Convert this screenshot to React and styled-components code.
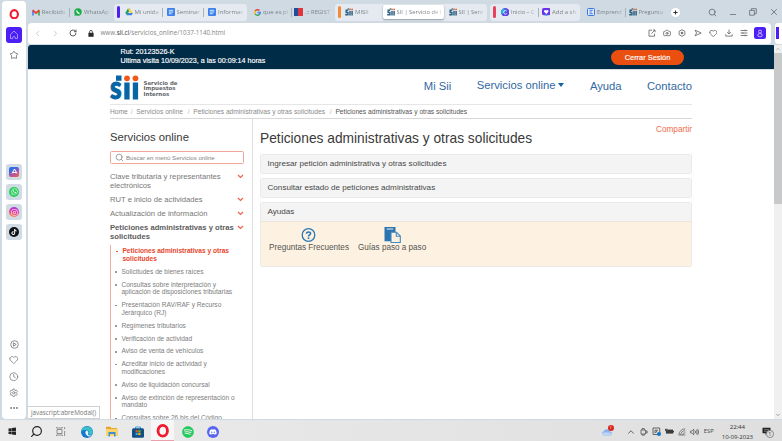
import React from 'react';
import styled, { createGlobalStyle, css } from 'styled-components';
import {
  Search, Heart, Clock, Settings, Camera,
  ChevronLeft, ChevronRight, RotateCw,
  ChevronUp, ChevronDown, X, Ellipsis,
} from 'lucide-react';
import { FaWhatsapp, FaInstagram, FaTiktok, FaSpotify, FaDiscord, FaWindows } from 'react-icons/fa';

const GlobalStyle = createGlobalStyle`
  *, *::before, *::after { box-sizing: border-box; }
  body { margin: 0; overflow: hidden; background: #d0dbe4; font-family: "Liberation Sans", Arial, sans-serif; }
  svg { display: block; flex: none; }
`;

const Desktop = styled.div`
  width: 782px;
  height: 441px;
  display: flex;
  flex-direction: column;
  overflow: hidden;
  white-space: nowrap;
`;
const Browser = styled.div`
  height: 420px;
  display: flex;
  gap: 2px;
  padding: 0 0 1px 2px;
  background: #cfdae3;
`;
const Sidebar = styled.nav`
  width: 24px;
  height: 418px;
  margin-top: 1px;
  display: flex;
  flex-direction: column;
  align-items: center;
  background: #fff;
  border-radius: 4px;
  color: #777c82;
`;
const SideSlot = styled.div`
  height: ${(p) => p.$h}px;
  width: 24px;
  flex: none;
  display: flex;
  align-items: center;
  justify-content: center;
`;
const HomeTile = styled.div`
  width: 16px;
  height: 16px;
  border-radius: 3px;
  display: grid;
  place-items: center;
  background: #4b1ff5;
`;
const AppTiles = styled.div`
  display: grid;
  gap: 4.3px;
  margin: 96.5px 0 96.5px;
`;
const AppTile = styled.div`
  width: 16px;
  height: 16px;
  border-radius: 3px;
  background: #d0dbe3;
  display: grid;
  place-items: center;
`;
const AppGlyph = styled.div`
  width: ${(p) => p.$s || 10}px;
  height: ${(p) => p.$s || 10}px;
  display: grid;
  place-items: center;
  color: #fff;
  border-radius: ${(p) => p.$r || '50%'};
  background: ${(p) => p.$bg};
`;

const Main = styled.div`
  width: 754px;
  height: 419px;
  display: flex;
  flex-direction: column;
`;
const TabStrip = styled.div`
  height: 23px;
  display: flex;
  align-items: center;
  padding: 1px 0 0;
  color: #7d8389;
`;
const TabGroup = styled.div`
  display: flex;
  align-items: center;
  width: ${(p) => p.$w}px;
  height: 17px;
  margin-right: ${(p) => p.$mr || 0}px;
  border-radius: 3px;
  background: #e4eaef;
`;
const GroupMark = styled.div`
  width: 3px;
  height: 12px;
  margin: 0 ${(p) => p.$mr}px 0 3px;
  border-radius: 1.5px;
  background: ${(p) => p.$c};
`;
const TabBox = styled.div`
  width: ${(p) => p.$w}px;
  height: 14px;
  flex: none;
  display: flex;
  align-items: center;
  padding-left: ${(p) => p.$pl}px;
  gap: 2px;
  ${(p) => p.$sep && css`
    &::after { content: ''; width: 1px; height: 9px; margin-left: auto; background: #a9b2ba; }
  `}
  ${(p) => p.$active && css`
    background: #fff;
    border-radius: 2px;
    box-shadow: 0 1px 2px #8d98a3;
  `}
`;
const TabText = styled.span`
  font: ${(p) => p.$s || 6}px/10px "Open Sans", "Noto Sans", sans-serif;
  mask-image: linear-gradient(to right, #000 75%, rgba(0, 0, 0, 0.35) 100%);
`;
const NewTab = styled.div`
  width: 9px;
  height: 9px;
  margin: 0 28px 0 4px;
  border-radius: 50%;
  background: #fff;
  display: grid;
  place-items: center;
`;
const WindowButtons = styled.div`
  display: flex;
  align-items: center;
  gap: 12.5px;
  color: #666c72;
`;
const Minimize = styled.i`
  width: 6px;
  height: 1px;
  margin: 5px 0 0 1px;
  background: #7d8389;
`;

const ToolbarRow = styled.div`
  display: flex;
  height: 22px;
  gap: 4px;
`;
const Toolbar = styled.div`
  width: 743px;
  height: 20.5px;
  display: flex;
  align-items: center;
  background: #fff;
  border-radius: 4px 4px 3px 3px;
  padding-left: 5px;
  color: #666a6f;
`;
const NavButtons = styled.div`
  display: flex;
  align-items: center;
  width: 55px;
  gap: 9px;
  color: #b9bdc1;
`;
const Address = styled.div`
  display: flex;
  align-items: center;
  gap: 6.5px;
  flex: 1;
  font: 6.25px/10px "Open Sans", "Noto Sans", sans-serif;
  color: #858585;
  b { font-weight: 400; color: #333; }
`;
const ToolIcons = styled.div`
  display: flex;
  align-items: center;
  gap: 7.3px;
  margin-right: 6px;
`;
const Profile = styled.div`
  width: 12px;
  height: 12px;
  border-radius: 2.5px;
  background: #4b1ff5;
  display: grid;
  place-items: center;
  margin: 0 5px 0 0;
`;
const SidePanel = styled.div`
  width: 7px;
  height: 20.5px;
  border-radius: 3px 0 0 3px;
  background: #fff;
  padding: 4px 1px;
  &::after { content: ''; display: block; width: 3px; height: 12px; background: #4b1ff5; }
`;

const Viewport = styled.div`
  display: flex;
  height: 374px;
  overflow: hidden;
`;
const Page = styled.main`
  position: relative;
  width: 746px;
  height: 374px;
  overflow: hidden;
  background: #fff;
  border-top-left-radius: 3px;
`;
const Scrollbar = styled.div`
  width: 8px;
  height: 374px;
  background: #f0f0f0;
  display: flex;
  flex-direction: column;
  align-items: center;
  justify-content: space-between;
  color: #8c8c8c;
`;
const ScrollThumb = styled.div`
  width: 8px;
  height: 150.5px;
  margin-bottom: auto;
  background: #c8c9ca;
`;
const ScrollCap = styled.div`
  height: 8px;
  display: grid;
  place-items: center;
`;
const SessionBar = styled.header`
  height: 25px;
  display: flex;
  align-items: center;
  justify-content: space-between;
  padding: 0 90px 0 92.5px;
  background: #012c48;
  border-bottom: 1px solid #d9dee1;
  color: #fff;
`;
const SessionText = styled.div`
  padding-top: 0.5px;
  font-size: 7.15px;
  line-height: 9px;
  -webkit-text-stroke: 0.15px #fff;
`;
const LogoutButton = styled.button`
  width: 73px;
  height: 15px;
  padding: 0;
  border: 0;
  border-radius: 8px;
  background: #ea4f10;
  color: #fff;
  font: 7.4px "Liberation Sans", Arial, sans-serif;
  -webkit-text-stroke: 0.15px #fff;
`;
const Container = styled.div`
  width: 582px;
  margin-left: 82px;
`;
const Masthead = styled.div`
  height: 34.5px;
  display: flex;
  align-items: flex-start;
  justify-content: space-between;
  border-bottom: 1.5px solid #e6e6e6;
`;
const Brand = styled.div`
  display: flex;
  align-items: flex-start;
  gap: 4px;
  padding-top: 4.5px;
`;
const BrandName = styled.div`
  padding-top: 6px;
  font: 700 5.45px/5.9px "DejaVu Sans", sans-serif;
  color: #626569;
`;
const SiteNav = styled.nav`
  display: flex;
  padding-top: 9px;
  font-size: 11.25px;
  line-height: 14px;
  color: #3269a3;
`;
const SiteLink = styled.a`
  display: flex;
  align-items: center;
  height: 14px;
  margin: ${(p) => (p.$up ? '-1px' : '0')} 0 0 25.4px;
  gap: 3px;
`;
const Caret = styled.i`
  border: 3.5px solid transparent;
  border-top: 4px solid #1263a3;
  border-bottom: 0;
`;
const Breadcrumb = styled.div`
  height: 14.5px;
  display: flex;
  align-items: center;
  font-size: 6.67px;
  color: #8a8a8a;
  border-bottom: 1px solid #d8d8d8;
  span { color: #555; }
  i { color: #bbb; margin: 0 3.8px 0 2.9px; font-style: normal; }
`;
const Columns = styled.div`
  display: flex;
  height: 302px;
`;
const MenuColumn = styled.aside`
  width: 142.5px;
  padding-top: 11px;
  border-right: 1.5px solid #dedede;
  color: #6b6b6b;
`;
const MenuTitle = styled.h2`
  margin: 0;
  font-size: 11.27px;
  font-weight: 400;
  line-height: 15px;
  color: #383838;
`;
const SearchField = styled.div`
  width: 134px;
  height: 13px;
  margin: 6px 0 7.6px;
  display: flex;
  align-items: center;
  gap: 2.5px;
  padding-left: 3.5px;
  border: 1px solid #f0a698;
  border-radius: 1.5px;
  font-size: 6.1px;
  color: #858585;
`;
const MenuItem = styled.div`
  display: flex;
  justify-content: space-between;
  width: 134px;
  margin-bottom: 4.8px;
  font-size: 7.66px;
  line-height: 9.2px;
  font-weight: ${(p) => (p.$bold ? 700 : 400)};
  color: ${(p) => (p.$bold ? '#5d5d5d' : '#777')};
  span { width: 127px; white-space: pre; }
  svg { margin-top: 2.5px; }
`;
const SubMenu = styled.ul`
  list-style: none;
  margin: -1px 0 0;
  padding: 2.3px 0 0 4px;
  border-left: 1px solid #f4aaa0;
`;
const SubItem = styled.li`
  display: flex;
  margin-bottom: 5px;
  white-space: pre;
  font-size: 6.6px;
  line-height: 7.8px;
  color: ${(p) => (p.$current ? '#e8452c' : '#7d7d7d')};
  font-weight: ${(p) => (p.$current ? 700 : 400)};
  &::before {
    content: '';
    width: 1.8px;
    height: 1.8px;
    flex: none;
    margin: 3.4px 4.8px 0 ${(p) => (p.$current ? 0.8 : -0.2)}px;
    border-radius: 50%;
    background: currentColor;
  }
`;
const Content = styled.section`
  width: 432px;
  margin-left: 7.5px;
`;
const ContentHead = styled.div`
  display: flex;
  justify-content: space-between;
  height: 34.5px;
  padding-top: 5px;
`;
const PageTitle = styled.h1`
  margin: 5px 0 0;
  font-size: 13.75px;
  line-height: 19px;
  font-weight: 400;
  color: #3a3a3a;
`;
const Share = styled.a`
  font-size: 8.2px;
  line-height: 12px;
  color: #ef6b4c;
`;
const Panel = styled.div`
  margin-bottom: 3.5px;
  border: 1px solid #e9e9e9;
  border-radius: 1.5px;
  overflow: hidden;
`;
const PanelHead = styled.div`
  height: 18.5px;
  padding-left: 6.5px;
  font-size: 8.12px;
  line-height: 18.5px;
  color: #484848;
  background: #f4f4f4;
`;
const PanelBody = styled.div`
  display: flex;
  gap: 9px;
  height: 45px;
  padding: 5px 8px;
  border-top: 1px solid #eae4da;
  background: #fdf2e1;
`;
const HelpLink = styled.a`
  display: flex;
  flex-direction: column;
  align-items: center;
  font-size: 8.15px;
  line-height: 10px;
  color: #545454;
`;
const StatusBubble = styled.div`
  position: absolute;
  left: 0;
  bottom: 0;
  width: 72px;
  height: 13.5px;
  padding-left: 3px;
  border: 1px solid #d0d0d0;
  border-left: 0;
  background: #fff;
  font: 6.3px/12px "Open Sans", "Noto Sans", sans-serif;
  color: #777;
`;

const Taskbar = styled.footer`
  height: 21px;
  display: flex;
  align-items: center;
  justify-content: space-between;
  padding-right: 8px;
  background: linear-gradient(to right, #ebebeb, #dfdfdf);
`;
const TaskGroup = styled.div`
  display: flex;
  height: 21px;
`;
const TaskSlot = styled.div`
  width: ${(p) => p.$w || 25.2}px;
  height: 21px;
  padding-top: 2px;
  display: grid;
  place-items: center;
  color: ${(p) => p.$c || '#222'};
  ${(p) => p.$open && css`
    background: #f6f6f6;
    border-bottom: 1px solid #eaa0aa;
  `}
`;
const Tray = styled.div`
  display: flex;
  align-items: center;
  height: 21px;
  padding-top: 2px;
  gap: 4px;
  color: #484848;
  font: 6px/9.5px "Open Sans", "Noto Sans", sans-serif;
`;
const Weather = styled.div`
  position: relative;
  margin: 0 9px 0 0;
`;
const Badge = styled.div`
  position: absolute;
  top: -3px;
  right: -1px;
  width: 6px;
  height: 6px;
  border-radius: 50%;
  background: #d5281d;
  color: #fff;
  font-size: 4px;
  line-height: 6px;
  text-align: center;
`;
const Lang = styled.span`
  margin: 0 4px 0 1px;
  font-size: 5.9px;
`;
const ClockText = styled.div`
  text-align: center;
  font-size: 6.1px;
  letter-spacing: -0.05px;
  color: #333;
`;
const Notice = styled.div`
  position: relative;
  margin: 0 3px 0 5px;
  color: #222;
`;
const NoticeCount = styled.div`
  position: absolute;
  left: 4px;
  top: 3px;
  width: 7.5px;
  height: 7.5px;
  border: 0.8px solid #888;
  border-radius: 50%;
  background: #ddd;
  font-size: 4.5px;
  line-height: 6px;
  text-align: center;
`;

const OperaLogo = ({ size, w = 2.6 }) => (
  <svg width={size} height={size} viewBox="0 0 12 12">
    <ellipse cx="6" cy="6" rx="4.2" ry="4.7" fill="none" stroke="#f0192f" strokeWidth={w} />
  </svg>
);
const SideStar = () => (
  <svg width="10" height="10" viewBox="0 0 10 10">
    <path d="M5 1.2l1.4 1.9 2.3.7-1.3 2 .1 2.6L5 7.7l-2.5.7.1-2.6-1.3-2 2.3-.7z" fill="none" stroke="#85898e" strokeLinejoin="round" />
  </svg>
);
const Gmail = () => (
  <svg width="8" height="7" viewBox="0 0 8 7">
    <path d="M1 6.5V1.5" stroke="#4285f4" strokeWidth="1.7" />
    <path d="M7 6.5V1.5" stroke="#34a853" strokeWidth="1.7" />
    <path d="M.6 1.3L4 4l3.4-2.7" fill="none" stroke="#ea4335" strokeWidth="1.8" />
  </svg>
);
const WhatsTab = () => (
  <svg width="8" height="8" viewBox="0 0 8 8">
    <circle cx="4" cy="4" r="3.7" fill="#19ad45" />
    <path d="M.4 7.8l.5-2.3 1.8 1.8z" fill="#19ad45" />
    <path d="M2.7 2.4q.2 2.6 2.9 3.2" fill="none" stroke="#fff" strokeWidth="1.1" />
  </svg>
);
const Drive = () => (
  <svg width="8" height="8" viewBox="0 0 8 8">
    <path d="M2.8.8h2.4L2.2 7 .2 5z" fill="#1da462" />
    <path d="M2.8.8h2.4L7.9 5H5.3z" fill="#ffcf46" />
    <path d="M1.4 7.2L2.6 5h5.3L6.6 7.2z" fill="#3f7fe8" />
  </svg>
);
const Docs = ({ color = '#3b82ee' }) => (
  <svg width="8" height="8" viewBox="0 0 8 8">
    <rect width="8" height="8" rx="1" fill={color} />
    <path d="M1.8 2.3h4.4M1.8 4h4.4M1.8 5.7h2.9" stroke="#fff" strokeWidth=".8" />
  </svg>
);
const Google = () => (
  <svg width="7" height="7" viewBox="0 0 8 8" fill="none" strokeWidth="1.6">
    <path d="M6.3 1.8A3.2 3.2 0 001.3 2.5" stroke="#ea4335" />
    <path d="M1.3 2.5a3.2 3.2 0 000 3" stroke="#fbbc05" />
    <path d="M1.3 5.5A3.2 3.2 0 006 6.4" stroke="#34a853" />
    <path d="M6 6.4A3 3 0 007.2 4H4" stroke="#4285f4" />
  </svg>
);
const Flag = () => (
  <svg width="9" height="8" viewBox="0 0 9 8">
    <rect width="4" height="8" fill="#1e4f9c" />
    <rect x="4" width="5" height="8" fill="#de3540" />
  </svg>
);
const SiiTab = () => (
  <svg width="8" height="8" viewBox="0 0 8 8">
    <path d="M3.2 2.2H1.2v2.3h1.7v2.3H.2" fill="none" stroke="#2d6284" strokeWidth="1.5" />
    <path d="M5 3v4.6M7.1 3v4.6" stroke="#2d6284" strokeWidth="1.5" />
    <path d="M2.6.3h1.6v1.3H2.6z" fill="#1f7a8c" />
    <circle cx="5" cy="1.4" r=".9" fill="#d8653c" />
    <circle cx="7.1" cy="1.4" r=".9" fill="#d8653c" />
  </svg>
);
const Canva = () => (
  <svg width="8.5" height="8.5" viewBox="0 0 8 8">
    <circle cx="4" cy="4" r="4" fill="#5b46e8" />
    <path d="M.4 5.6A4 4 0 013 .2L4 4z" fill="#20b8d8" />
    <path d="M5.4 2.9a1.7 1.7 0 10.1 2.2" fill="none" stroke="#fff" strokeWidth=".8" />
  </svg>
);
const Shield = () => (
  <svg width="8.5" height="8.5" viewBox="0 0 8 8">
    <rect width="8" height="6.8" rx="1.6" fill="#6a35ea" />
    <path d="M2.5 6h3L4 8z" fill="#2cb7e8" />
    <path d="M4 5.7L2 3.6A1.1 1.1 0 014 2.4a1.1 1.1 0 012 1.2z" fill="#fff" />
  </svg>
);
const FormTab = () => (
  <svg width="8" height="8" viewBox="0 0 8 8">
    <rect x=".5" y=".5" width="7" height="7" rx="1" fill="#dfeafc" stroke="#3876dd" />
    <path d="M2.5 2.3h3.3M2.5 4h2.3M2.5 5.7h3.3" stroke="#3876dd" strokeWidth=".9" />
  </svg>
);
const RestoreIcon = () => (
  <svg width="8" height="8" viewBox="0 0 8 8" fill="none" stroke="#70767c" strokeWidth=".9">
    <path d="M.6 2.4h4.8v4.8H.6zM2.3 2.4V.7h5v4.9H5.4" />
  </svg>
);
const LockIcon = () => (
  <svg width="6" height="7" viewBox="0 0 6 7">
    <rect x=".4" y="2.8" width="5.2" height="4" fill="#2b2b2b" />
    <path d="M1.6 3V1.8a1.4 1.4 0 012.8 0V3" fill="none" stroke="#2b2b2b" strokeWidth=".8" />
  </svg>
);
const ToolIcon = ({ d, fill }) => (
  <svg width="8" height="8" viewBox="0 0 8 8" fill="none" stroke="#65696e" strokeWidth=".85" strokeLinejoin="round">
    <path d={d} />
    {fill && <circle cx="4" cy="4" r=".9" fill="#65696e" />}
  </svg>
);
const ProfileIcon = () => (
  <svg width="8" height="9" viewBox="0 0 8 9" fill="none" stroke="#cfc6ff" strokeWidth=".9">
    <circle cx="4" cy="2.6" r="1.5" />
    <rect x="1.8" y="4.7" width="4.4" height="3" rx="1.5" />
  </svg>
);
const HomeIcon = () => (
  <svg width="10" height="10" viewBox="0 0 10 10">
    <path d="M1.5 4.4L5 1l3.5 3.4v4.2H6.3V7.2q-1.3-1.5-2.6 0v1.4H1.5z" fill="none" stroke="#aaa0ff" strokeWidth=".9" strokeLinejoin="round" />
  </svg>
);
const SiiLogo = () => (
  <svg width="29.5" height="25" viewBox="0 0 29.5 25" overflow="visible">
    <text x="0" y="24.2" fontFamily="Lato" fontWeight="900" fontSize="32" fill="#0764a5" textLength="11.6" lengthAdjust="spacingAndGlyphs" stroke="#0764a5" strokeWidth="1">s</text>
    <rect x="6" y="0.5" width="5.5" height="5.3" fill="#0764a5" />
    <rect x="14.3" y="7.5" width="5.3" height="17" fill="#0764a5" />
    <rect x="22.8" y="7.5" width="5.3" height="17" fill="#0764a5" />
    <circle cx="17" cy="3.3" r="2.9" fill="#ef5a1c" />
    <circle cx="25.5" cy="3.3" r="2.9" fill="#ef5a1c" />
  </svg>
);
const MenuChevron = () => (
  <svg width="7" height="5" viewBox="0 0 7 5">
    <path d="M1 1l2.5 2.4L6 1" fill="none" stroke="#f0604a" strokeWidth="1.2" />
  </svg>
);
const QuestionIcon = () => (
  <svg width="15" height="16" viewBox="0 0 15 16">
    <circle cx="7.5" cy="8" r="6.3" fill="none" stroke="#2b78b5" strokeWidth="1.3" />
    <path d="M5.5 6.8C5.5 4.6 9.6 4.4 9.6 6.6 9.6 8 7.5 7.9 7.5 9.4" fill="none" stroke="#2b78b5" strokeWidth="1.6" />
    <rect x="6.7" y="10.4" width="1.7" height="1.6" fill="#2b78b5" />
  </svg>
);
const GuidesIcon = () => (
  <svg width="17" height="16" viewBox="0 0 17 16">
    <path d="M.5 0H11.5V14.3H.5z" fill="#2b74b2" />
    <path d="M2.7 2h6.5" stroke="#fdf2e1" />
    <path d="M7 5.2h5.5l3.8 3.8v6.5H7z" fill="#fdf2e1" stroke="#4488bf" strokeWidth="1.1" />
    <path d="M12.3 5.2v4h4" fill="none" stroke="#4488bf" strokeWidth="1.1" />
  </svg>
);
const TaskView = () => (
  <svg width="10" height="9" viewBox="0 0 10 9" fill="none" stroke="#777" strokeWidth=".8">
    <path d="M1 2.5h5v4H1zM.6 0v1h5.8V0M.6 9V8h5.8v1M8.6 0v2.2M8.6 4v5" />
  </svg>
);
const Edge = () => (
  <svg width="12" height="12" viewBox="0 0 12 12">
    <circle cx="6" cy="6" r="6" fill="#1479cb" />
    <path d="M.1 5.5A6 6 0 0112 6c0 2.2-1.9 3.2-4 2.7.8-3-1-4.6-3.5-4.6Q1.6 4 .1 5.5z" fill="#38bfc8" />
    <path d="M5.1 4.6q-2.3 3.5 2.5 5.9 2 .3 3.2-1.2-5 1.2-3.3-2.5Q7 4.7 5.1 4.6z" fill="#e8f4f8" />
  </svg>
);
const Folder = () => (
  <svg width="12" height="11" viewBox="0 0 12 11">
    <path d="M0 .7h4.5l1 1.3H11V10H0z" fill="#e6a62c" />
    <path d="M0 3h12v7H0z" fill="#fbd56b" />
    <path d="M2.5 10.5V6h7v4.5H8V8H4v2.5z" fill="#3c8fd2" />
  </svg>
);
const Store = () => (
  <svg width="12" height="12" viewBox="0 0 12 12">
    <path d="M3.5 3V1h5v2" fill="none" stroke="#3f9ddd" />
    <rect y="2.2" width="12" height="9.5" rx="1.5" fill="#124f86" />
    <rect x="3.6" y="4.2" width="2.2" height="2.2" fill="#f25022" />
    <rect x="6.3" y="4.2" width="2.2" height="2.2" fill="#7fba00" />
    <rect x="3.6" y="6.9" width="2.2" height="2.2" fill="#31a9ee" />
    <rect x="6.3" y="6.9" width="2.2" height="2.2" fill="#ffb900" />
  </svg>
);
const Cloud = () => (
  <svg width="12" height="8" viewBox="0 0 12 8">
    <path d="M2.5 7.5a2.2 2.2 0 01.2-4.2A3.4 3.4 0 019 3.4a2.1 2.1 0 01.6 4.1z" fill="#86b2f0" />
    <path d="M2.5 7.5q-2-.5-1.7-2Q5 3 11.5 5.8q-.4 1.5-2 1.7z" fill="#bcd4f6" />
  </svg>
);
const TrayPlug = () => (
  <svg width="8" height="8" viewBox="0 0 8 8" fill="none" stroke="#555" strokeWidth=".8">
    <path d="M1 2h4.5v4H1zM2 2V.6h2.4V2M2 6v1.2h2.4V6M5.5 3h1.7v2H5.5" />
  </svg>
);
const TrayScreen = () => (
  <svg width="9" height="9" viewBox="0 0 9 9">
    <path d="M1 1h6.7v6.5H1zM3 6V3.2h2.5L3.5 6" fill="none" stroke="#555" strokeWidth=".9" />
    <circle cx="7" cy="7" r="2" fill="#1474c8" />
  </svg>
);
const TrayBattery = () => (
  <svg width="9" height="7" viewBox="0 0 9 7">
    <rect x="1" y="1.6" width="7" height="4" fill="#3b3b3b" />
    <path d="M8 2.8h1v1.6H8z" fill="#3b3b3b" />
    <path d="M0 .8h2.6v2.4H0z" fill="#555" />
  </svg>
);
const TrayWifi = () => (
  <svg width="8" height="8" viewBox="0 0 8 8" fill="none" stroke="#666" strokeWidth=".8">
    <path d="M.8 7A6.5 6.5 0 017.3.8M2.7 7a4.6 4.6 0 014.6-4.2M4.6 7a2.6 2.6 0 012.7-2.2M.8 7h6.5" />
  </svg>
);
const TrayVolume = () => (
  <svg width="9" height="8" viewBox="0 0 9 8" fill="none" stroke="#555" strokeWidth=".8">
    <path d="M.6 3h1.2l2-1.7v5.4l-2-1.7H.6zM5.2 2.8q.9 1.2 0 2.4M6.4 1.8q1.6 2.2 0 4.4M7.6.9q2.2 3.1 0 6.2" />
  </svg>
);
const NoticeIcon = () => (
  <svg width="9" height="9" viewBox="0 0 9 9">
    <path d="M.5.7h8v5.6H5.4L3.6 8.2V6.3H.5z" fill="#222" />
    <path d="M2 2.6h5M2 4.3h5" stroke="#aaa" strokeWidth=".6" />
  </svg>
);

const Tab = ({ w, pl, icon, label, sep, active, size }) => (
  <TabBox $w={w} $pl={pl} $sep={sep} $active={active}>
    {icon}
    <TabText $s={size}>{label}</TabText>
  </TabBox>
);

const TOOLS = [
  { d: 'M4 1.2H1v6h5.6V4.5M3.4 4.7L7 1M4.8 1H7v2.2' },
  { camera: true },
  { d: 'M4 .7L6.9 2.3v3.4L4 7.3 1.1 5.7V2.3z', fill: true },
  { d: 'M1 1.2L7.2 4 1 6.8 2.6 4z' },
  { heart: true },
  { d: 'M4 .6v4.2M2.2 3.2L4 5l1.8-1.8M.8 5.3v1.8h6.4V5.3' },
  { d: 'M.6 1.5h6.8M.6 4h6.8M.6 6.5h6.8M5.2.7v1.6M2.8 3.2v1.6M5.2 5.7v1.6' },
];
const MENU = [
  { label: 'Clave tributaria y representantes\nelectrónicos' },
  { label: 'RUT e inicio de actividades' },
  { label: 'Actualización de información' },
  { label: 'Peticiones administrativas y otras\nsolicitudes', bold: true },
];
const SUBMENU = [
  'Peticiones administrativas y otras\nsolicitudes',
  'Solicitudes de bienes raíces',
  'Consultas sobre interpretación y\naplicación de disposiciones tributarias',
  'Presentación RAV/RAF y Recurso\nJerárquico (RJ)',
  'Regímenes tributarios',
  'Verificación de actividad',
  'Aviso de venta de vehículos',
  'Acreditar inicio de actividad y\nmodificaciones',
  'Aviso de liquidación concursal',
  'Aviso de extinción de representación o\nmandato',
  'Consultas sobre 26 bis del Código',
];

export default function App() {
  return (
    <Desktop>
      <GlobalStyle />
      <Browser>
        <Sidebar>
          <SideSlot $h={26}><OperaLogo size={10.5} w={2.4} /></SideSlot>
          <SideSlot $h={16}><HomeTile><HomeIcon /></HomeTile></SideSlot>
          <SideSlot $h={24}><SideStar /></SideSlot>
          <AppTiles>
            <AppTile>
              <AppGlyph $r="2px" $bg="linear-gradient(150deg, #356de8 30%, #b453a6 60%, #f2643c)">
                <svg width="7" height="7" viewBox="0 0 7 7"><path d="M1 5.5L3.5 1 6 5.5M2 4.5h3" fill="none" stroke="#fff" /></svg>
              </AppGlyph>
            </AppTile>
            <AppTile><AppGlyph $bg="#2bcf5f"><FaWhatsapp size={7} /></AppGlyph></AppTile>
            <AppTile><AppGlyph $bg="linear-gradient(200deg, #8b3cf0, #e83a9c 50%, #fb9e35)"><FaInstagram size={7} /></AppGlyph></AppTile>
            <AppTile><AppGlyph $bg="#101114"><FaTiktok size={6} /></AppGlyph></AppTile>
          </AppTiles>
          <SideSlot $h={15}>
            <svg width="9" height="9" viewBox="0 0 9 9" fill="none" stroke="#777c82" strokeWidth=".85">
              <circle cx="4.5" cy="4.5" r="3.8" /><path d="M3.4 2.8l2.8 1.7-2.8 1.7z" />
            </svg>
          </SideSlot>
          <SideSlot $h={16.5}><Heart size={9.5} strokeWidth={2} /></SideSlot>
          <SideSlot $h={16.5}><Clock size={9.5} strokeWidth={2} /></SideSlot>
          <SideSlot $h={16}><Settings size={9.5} strokeWidth={2} /></SideSlot>
          <SideSlot $h={14}><Ellipsis size={10} strokeWidth={2.6} /></SideSlot>
        </Sidebar>

        <Main>
          <TabStrip>
            <Tab w={42} pl={3.5} icon={<Gmail />} label="Recibido" sep />
            <Tab w={43.5} pl={4} icon={<WhatsTab />} label="WhatsAp" />
            <TabGroup $w={133.5} $mr={3}>
              <GroupMark $c="#4b1ff5" $mr={4.5} />
              <Tab w={39} pl={0.5} icon={<Drive />} label="Mi unida" sep />
              <Tab w={41} pl={3.5} icon={<Docs />} label="Seminar" sep />
              <Tab w={41} pl={4} icon={<Docs />} label="Informac" />
            </TabGroup>
            <Tab w={42} pl={4} icon={<Google />} label="que es pl" sep />
            <Tab w={43} pl={2} icon={<Flag />} label=".:: REGIST" size={5.8} />
            <TabGroup $w={152} $mr={3}>
              <GroupMark $c="#f58a35" $mr={4} />
              <Tab w={38} pl={0} icon={<SiiTab />} label="MISII" />
              <Tab w={61} pl={3.5} icon={<SiiTab />} label="SII | Servicio de I" active size={5.8} />
              <Tab w={40} pl={4.5} icon={<SiiTab />} label="SII | Serv" size={5.8} />
            </TabGroup>
            <TabGroup $w={90} $mr={3}>
              <GroupMark $c="#e8405f" $mr={4} />
              <Tab w={39} pl={0.5} icon={<Canva />} label="Inicio – C" size={5.7} sep />
              <Tab w={40} pl={2.5} icon={<Shield />} label="Add a sh" />
            </TabGroup>
            <Tab w={42.5} pl={4} icon={<FormTab />} label="Emprend" size={5.8} sep />
            <Tab w={41} pl={3} icon={<SiiTab />} label="Pregunta" size={5.8} />
            <NewTab>
              <svg width="5" height="5" viewBox="0 0 5 5"><path d="M2.5 .4v4.2M.4 2.5h4.2" stroke="#333" strokeWidth="1.1" /></svg>
            </NewTab>
            <WindowButtons>
              <Search size={9} strokeWidth={2.2} />
              <Minimize />
              <RestoreIcon />
              <X size={10} strokeWidth={2} />
            </WindowButtons>
          </TabStrip>

          <ToolbarRow>
            <Toolbar>
              <NavButtons>
                <ChevronLeft size={9} />
                <ChevronRight size={9} />
                <RotateCw size={8} color="#444" strokeWidth={2.5} />
              </NavButtons>
              <Address>
                <LockIcon />
                <div>www.<b>sii.cl</b>/servicios_online/1037-1140.html</div>
              </Address>
              <ToolIcons>
                {TOOLS.map((t, i) => {
                  if (t.camera) return <Camera key={i} size={8} strokeWidth={2.4} />;
                  if (t.heart) return <Heart key={i} size={8.5} strokeWidth={2.4} />;
                  return <ToolIcon key={i} d={t.d} fill={t.fill} />;
                })}
              </ToolIcons>
              <Profile><ProfileIcon /></Profile>
            </Toolbar>
            <SidePanel />
          </ToolbarRow>

          <Viewport>
            <Page>
              <SessionBar>
                <SessionText>
                  Rut: 20123526-K<br />
                  Ultima visita 10/09/2023, a las 00:09:14 horas
                </SessionText>
                <LogoutButton>Cerrar Sesión</LogoutButton>
              </SessionBar>
              <Container>
                <Masthead>
                  <Brand>
                    <SiiLogo />
                    <BrandName>Servicio de<br />Impuestos<br />Internos</BrandName>
                  </Brand>
                  <SiteNav>
                    <SiteLink>Mi Sii</SiteLink>
                    <SiteLink $up>Servicios online <Caret /></SiteLink>
                    <SiteLink>Ayuda</SiteLink>
                    <SiteLink>Contacto</SiteLink>
                  </SiteNav>
                </Masthead>
                <Breadcrumb>
                  Home<i>/</i>Servicios online<i>&nbsp;/</i>Peticiones administrativas y otras solicitudes<i>&nbsp;/</i>
                  <span>Peticiones administrativas y otras solicitudes</span>
                </Breadcrumb>
                <Columns>
                  <MenuColumn>
                    <MenuTitle>Servicios online</MenuTitle>
                    <SearchField><Search size={9} strokeWidth={2} />Buscar en menú Servicios online</SearchField>
                    {MENU.map((m) => (
                      <MenuItem key={m.label} $bold={m.bold}><span>{m.label}</span><MenuChevron /></MenuItem>
                    ))}
                    <SubMenu>
                      {SUBMENU.map((label, i) => (
                        <SubItem key={label} $current={i === 0}>{label}</SubItem>
                      ))}
                    </SubMenu>
                  </MenuColumn>
                  <Content>
                    <ContentHead>
                      <PageTitle>Peticiones administrativas y otras solicitudes</PageTitle>
                      <Share>Compartir</Share>
                    </ContentHead>
                    <Panel><PanelHead>Ingresar petición administrativa y otras solicitudes</PanelHead></Panel>
                    <Panel><PanelHead>Consultar estado de peticiones administrativas</PanelHead></Panel>
                    <Panel>
                      <PanelHead>Ayudas</PanelHead>
                      <PanelBody>
                        <HelpLink><QuestionIcon />Preguntas Frecuentes</HelpLink>
                        <HelpLink><GuidesIcon />Guías paso a paso</HelpLink>
                      </PanelBody>
                    </Panel>
                  </Content>
                </Columns>
              </Container>
              <StatusBubble>javascript:abreModal()</StatusBubble>
            </Page>
            <Scrollbar>
              <ScrollCap><ChevronUp size={6} /></ScrollCap>
              <ScrollThumb />
              <ScrollCap><ChevronDown size={6} strokeWidth={3} /></ScrollCap>
            </Scrollbar>
          </Viewport>
        </Main>
      </Browser>

      <Taskbar>
        <TaskGroup>
          <TaskSlot $w={24}><FaWindows size={8.5} /></TaskSlot>
          <TaskSlot><Search size={13} strokeWidth={2.2} transform="scale(-1 1)" /></TaskSlot>
          <TaskSlot $w={24}><TaskView /></TaskSlot>
          <TaskSlot $w={27}><Edge /></TaskSlot>
          <TaskSlot $w={24.5}><Folder /></TaskSlot>
          <TaskSlot $w={26}><Store /></TaskSlot>
          <TaskSlot $w={23.5} $open><OperaLogo size={13.5} w={2.5} /></TaskSlot>
          <TaskSlot $w={27} $c="#20cc5c"><FaSpotify size={12} /></TaskSlot>
          <TaskSlot $w={24}>
            <AppGlyph $s={12} $bg="#5865f2"><FaDiscord size={8} /></AppGlyph>
          </TaskSlot>
        </TaskGroup>
        <Tray>
          <Weather><Cloud /><Badge>1</Badge></Weather>
          <ChevronUp size={10} />
          <TrayPlug />
          <TrayScreen />
          <TrayBattery />
          <TrayWifi />
          <TrayVolume />
          <Lang>ESP</Lang>
          <ClockText>22:44<br />10-09-2023</ClockText>
          <Notice><NoticeIcon /><NoticeCount>1</NoticeCount></Notice>
        </Tray>
      </Taskbar>
    </Desktop>
  );
}
